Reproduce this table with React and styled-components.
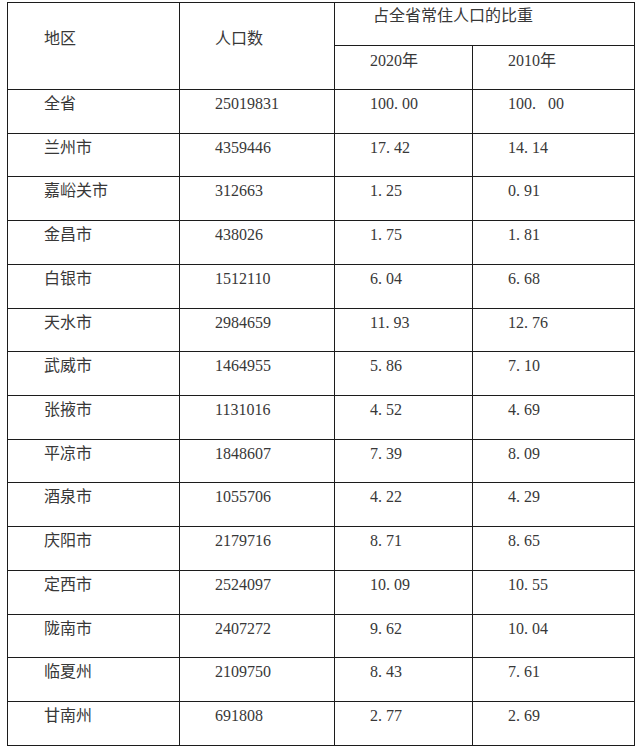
import React from "react";
import styled, { createGlobalStyle } from "styled-components";

const GlobalStyle = createGlobalStyle`
  html, body {
    margin: 0;
    padding: 0;
    background: #fff;
  }
  body {
    font-family: "Liberation Serif", "Noto Sans CJK SC", serif;
    color: #383838;
  }
`;

const Page = styled.div`
  padding: 2px 0 0 7px;
`;

const Table = styled.table`
  border-collapse: collapse;
  table-layout: fixed;
  width: 627px;
  border: 1px solid #1c1c1c;
  font-size: 16px;
  line-height: 20px;
`;

const Cell = styled.td`
  border: 1px solid #1c1c1c;
  border-top-color: ${({ $soft }) => ($soft ? "#6a6a6a" : "#1c1c1c")};
  vertical-align: top;
  padding: ${({ $top }) => $top || 4}px 0 0 ${({ $left }) => $left || 35}px;
  white-space: nowrap;
  font-weight: normal;
  text-align: left;
`;

const HeadRow = styled.tr`
  height: ${({ $h }) => $h}px;
`;

const Row = styled.tr`
  height: 43.73px;
`;

// SimSun-like half-width period: the dot sits left in a digit-wide box
const Dot = styled.span`
  display: inline-block;
  width: ${({ $full }) => ($full ? "1em" : "0.5em")};
`;

const Num = ({ value }) => {
  const full = value.includes("．");
  const parts = value.split(/[.．]/);
  if (parts.length < 2) return value;
  return (
    <>
      {parts[0]}
      <Dot $full={full}>.</Dot>
      {parts[1]}
    </>
  );
};

const rows = [
  ["全省", "25019831", "100.00", "100．00"],
  ["兰州市", "4359446", "17.42", "14.14"],
  ["嘉峪关市", "312663", "1.25", "0.91"],
  ["金昌市", "438026", "1.75", "1.81"],
  ["白银市", "1512110", "6.04", "6.68"],
  ["天水市", "2984659", "11.93", "12.76"],
  ["武威市", "1464955", "5.86", "7.10"],
  ["张掖市", "1131016", "4.52", "4.69"],
  ["平凉市", "1848607", "7.39", "8.09"],
  ["酒泉市", "1055706", "4.22", "4.29"],
  ["庆阳市", "2179716", "8.71", "8.65"],
  ["定西市", "2524097", "10.09", "10.55"],
  ["陇南市", "2407272", "9.62", "10.04"],
  ["临夏州", "2109750", "8.43", "7.61"],
  ["甘南州", "691808", "2.77", "2.69"],
];

export default function App() {
  return (
    <>
      <GlobalStyle />
      <Page>
        <Table>
          <colgroup>
            <col style={{ width: 172 }} />
            <col style={{ width: 155 }} />
            <col style={{ width: 138 }} />
            <col style={{ width: 162 }} />
          </colgroup>
          <thead>
            <HeadRow $h={43}>
              <Cell as="th" rowSpan={2} $top={26} $left={36}>
                地区
              </Cell>
              <Cell as="th" rowSpan={2} $top={26}>
                人口数
              </Cell>
              <Cell as="th" colSpan={2} $top={3} $left={38}>
                占全省常住人口的比重
              </Cell>
            </HeadRow>
            <HeadRow $h={44}>
              <Cell as="th" $top={5}>2020年</Cell>
              <Cell as="th" $top={5}>2010年</Cell>
            </HeadRow>
          </thead>
          <tbody>
            {rows.map((r, i) => (
              <Row key={r[0]}>
                {r.map((v, j) => (
                  <Cell key={j} $left={j === 0 ? 36 : 35} $soft={i % 3 === 0}>
                    {j >= 2 ? <Num value={v} /> : v}
                  </Cell>
                ))}
              </Row>
            ))}
          </tbody>
        </Table>
      </Page>
    </>
  );
}
